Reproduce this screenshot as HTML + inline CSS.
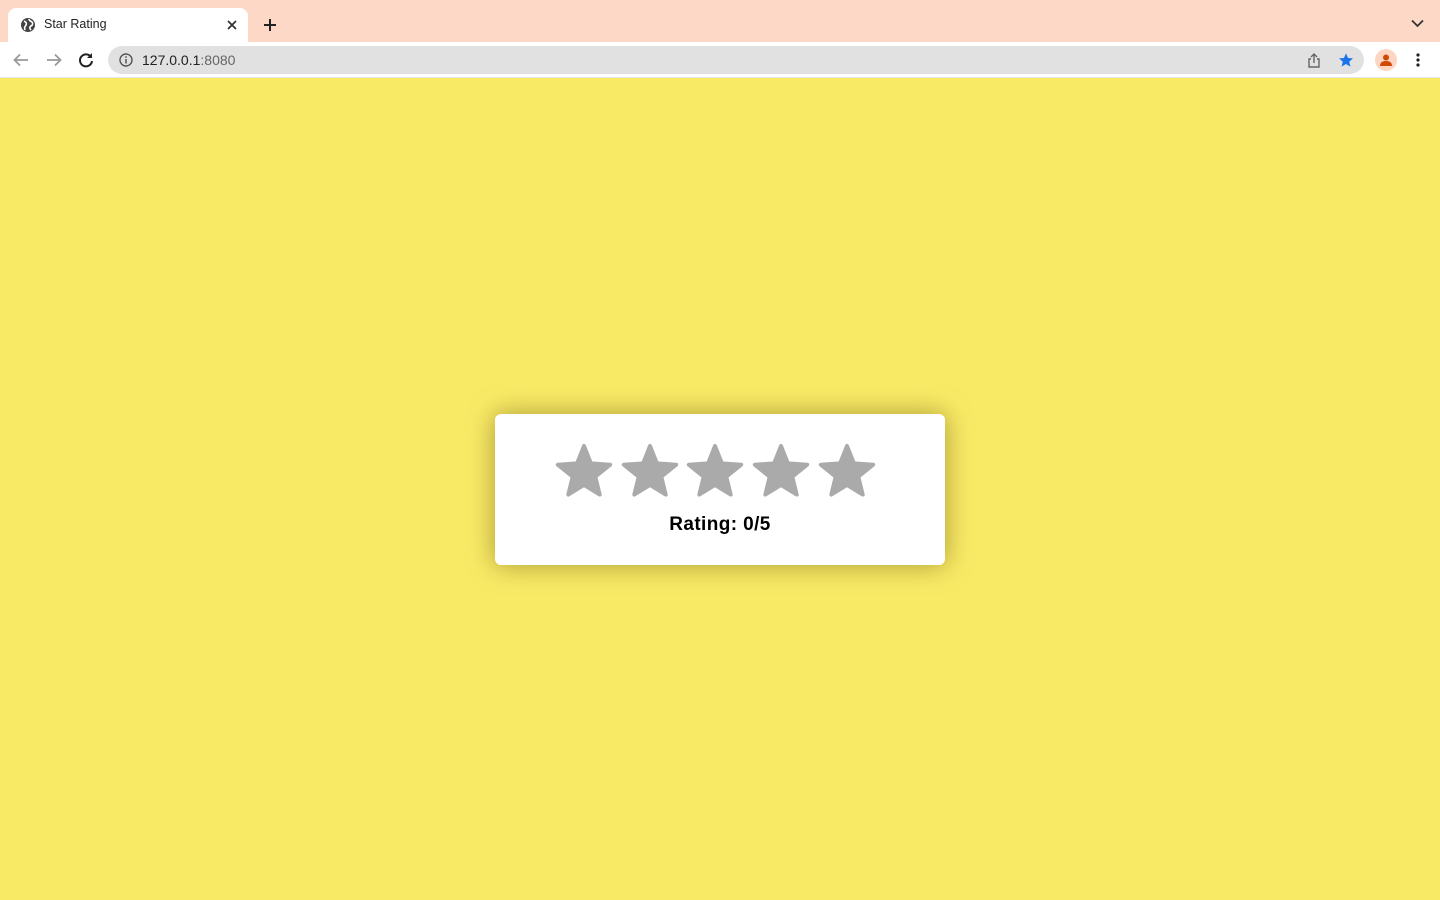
<!DOCTYPE html>
<html><head><meta charset="utf-8"><style>
*{margin:0;padding:0;box-sizing:border-box}
body{width:1440px;height:900px;overflow:hidden;font-family:"Liberation Sans",sans-serif;background:#f9ea66;position:relative}
.tabs{position:absolute;top:0;left:0;width:1440px;height:42px;background:#fed8c6}
.tab{position:absolute;left:8px;top:8px;width:240px;height:34px;background:#fff;border-radius:8px 8px 0 0}
.tab .t{position:absolute;left:36px;top:9px;font-size:12.5px;color:#222}
.bar{position:absolute;top:42px;left:0;width:1440px;height:36px;background:#fff;border-bottom:1px solid #e5e5e5}
.url{position:absolute;left:108px;top:4px;width:1256px;height:28px;background:#e1e1e1;border-radius:14px}
.url .u{position:absolute;left:34px;top:6px;font-size:14px;color:#222}
.url .u span{color:#666}
.card{position:absolute;left:495px;top:414px;width:450px;height:151px;background:#fff;border-radius:6px;box-shadow:0 0 26px rgba(90,75,0,.5)}
.rt{position:absolute;left:0;width:450px;top:100px;line-height:22px;text-align:center;font-weight:bold;font-size:19px;letter-spacing:0.4px;color:#000}
</style></head><body>
<div class="tabs">
 <div class="tab">
  <svg style="position:absolute;left:12px;top:9px" width="16" height="16" viewBox="0 0 16 16"><circle cx="8" cy="8" r="7" fill="#444"/><path d="M4 4c2 1 3 2 2 4s-2 2-1 5M9 2c0 2 2 2 3 3s1 3-1 4-1 3 0 4" stroke="#fff" stroke-width="1.6" fill="none"/></svg>
  <div class="t">Star Rating</div>
  <svg style="position:absolute;left:218px;top:11px" width="12" height="12" viewBox="0 0 12 12"><path d="M2 2L10 10M10 2L2 10" stroke="#333" stroke-width="1.8"/></svg>
 </div>
 <svg style="position:absolute;left:262px;top:17px" width="16" height="16" viewBox="0 0 16 16"><path d="M8 2V14M2 8H14" stroke="#222" stroke-width="2"/></svg>
 <svg style="position:absolute;left:1411px;top:19px" width="13" height="9" viewBox="0 0 13 9"><path d="M1 1.5L6.5 7L12 1.5" stroke="#333" stroke-width="1.8" fill="none"/></svg>
</div>
<div class="bar">
 <svg style="position:absolute;left:12px;top:9px" width="18" height="18" viewBox="0 0 18 18"><path d="M16 9H3M8 3.5L2.5 9L8 14.5" stroke="#999" stroke-width="1.8" fill="none"/></svg>
 <svg style="position:absolute;left:45px;top:9px" width="18" height="18" viewBox="0 0 18 18"><path d="M2 9H15M10 3.5L15.5 9L10 14.5" stroke="#999" stroke-width="1.8" fill="none"/></svg>
 <svg style="position:absolute;left:77px;top:9px" width="18" height="18" viewBox="0 0 18 18"><path d="M14 6A6 6 0 1 0 15 10" stroke="#222" stroke-width="2" fill="none"/><path d="M15 2V7H10Z" fill="#222"/></svg>
 <div class="url">
  <svg style="position:absolute;left:11px;top:7px" width="14" height="14" viewBox="0 0 14 14"><circle cx="7" cy="7" r="6" stroke="#555" stroke-width="1.4" fill="none"/><path d="M7 6V10.5" stroke="#555" stroke-width="1.5"/><circle cx="7" cy="4" r=".9" fill="#555"/></svg>
  <div class="u">127.0.0.1<span>:8080</span></div>
  <svg style="position:absolute;left:1199px;top:7px" width="14" height="16" viewBox="0 0 14 16"><path d="M4 6H2V14H12V6H10M7 10V1M4 4L7 1L10 4" stroke="#666" stroke-width="1.4" fill="none"/></svg>
  <svg style="position:absolute;left:1230px;top:6px" width="16" height="16" viewBox="0 0 24 24"><path d="M12 2l3 7 7.5.6-5.7 5 1.8 7.4L12 18l-6.6 4 1.8-7.4-5.7-5L9 9z" fill="#1a73e8"/></svg>
 </div>
 <div style="position:absolute;left:1375px;top:7px;width:22px;height:22px;border-radius:50%;background:#fcd6c2"></div>
 <svg style="position:absolute;left:1378px;top:10px" width="16" height="16" viewBox="0 0 16 16"><circle cx="8" cy="5.5" r="3" fill="#d04a02"/><path d="M2 14c0-4 3-5 6-5s6 1 6 5z" fill="#d04a02"/></svg>
 <svg style="position:absolute;left:1415px;top:10px" width="6" height="16" viewBox="0 0 6 16"><circle cx="3" cy="3" r="1.6" fill="#222"/><circle cx="3" cy="8" r="1.6" fill="#222"/><circle cx="3" cy="13" r="1.6" fill="#222"/></svg>
</div>
<div class="card">
 <svg style="position:absolute;left:0;top:0" width="450" height="100" viewBox="0 0 450 100">
  <defs><polygon id="s" points="0,-27 6.9,-9.6 26.2,-8.3 11.3,3.7 15.7,21.6 0,11.9 -15.7,21.6 -11.3,3.7 -26.2,-8.3 -6.9,-9.6" fill="#aaa" stroke="#aaa" stroke-width="4" stroke-linejoin="round"/></defs>
  <use href="#s" x="89" y="59"/>
  <use href="#s" x="155" y="59"/>
  <use href="#s" x="220" y="59"/>
  <use href="#s" x="286" y="59"/>
  <use href="#s" x="352" y="59"/>
 </svg>
 <div class="rt">Rating: 0/5</div>
</div>
</body></html>
